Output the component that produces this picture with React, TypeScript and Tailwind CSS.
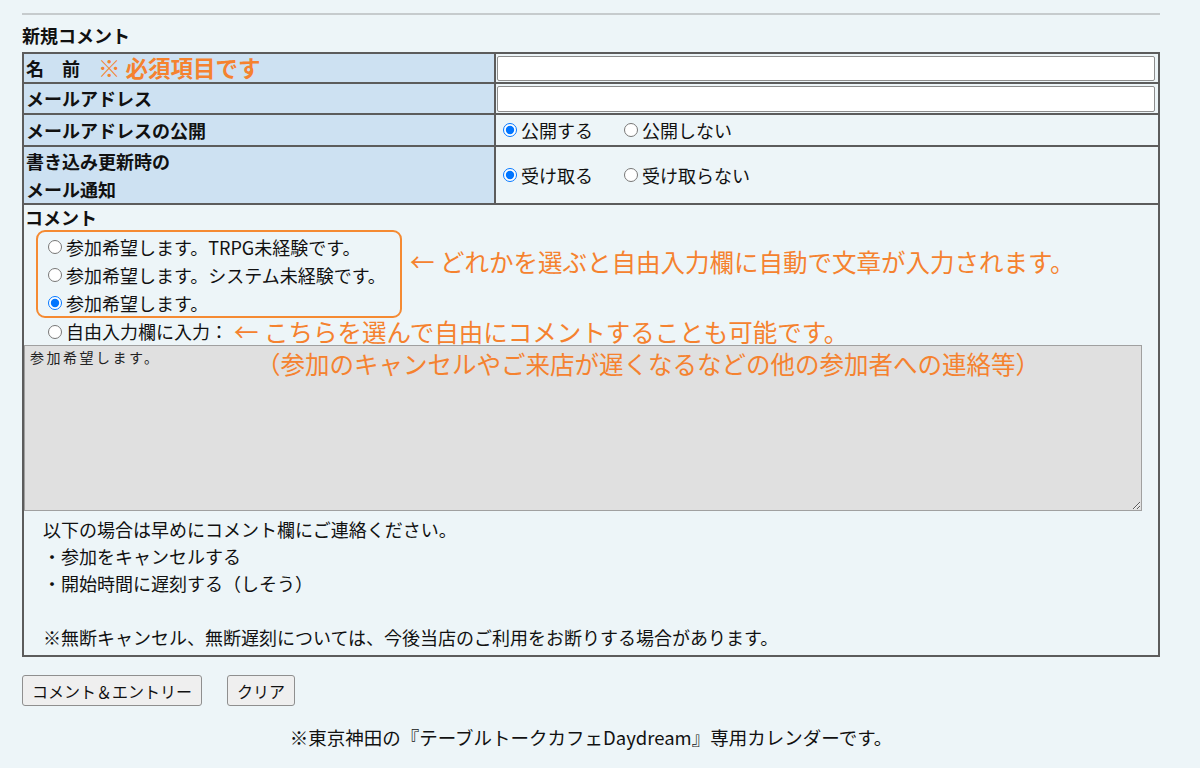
import { useState } from 'react'

const orange = 'text-[#f5822f]'

function Radio({ name, checked, onChange }: { name: string; checked: boolean; onChange: () => void }) {
  return (
    <input
      type="radio"
      name={name}
      checked={checked}
      onChange={onChange}
      className="w-[14px] h-[14px] m-0 mr-[4px] shrink-0"
    />
  )
}

export default function App() {
  const [publish, setPublish] = useState('yes')
  const [notify, setNotify] = useState('yes')
  const [preset, setPreset] = useState(2)

  const presets = [
    '参加希望します。TRPG未経験です。',
    '参加希望します。システム未経験です。',
    '参加希望します。',
  ]

  return (
    <div
      className="min-h-[768px] w-full bg-[#edf5f8] text-[#111] text-[18px]"
      style={{ fontFamily: '"Noto Sans CJK JP", "Noto Sans", sans-serif' }}
    >
      <div className="ml-[22px] w-[1138px] pt-[13px]">
        <div className="h-[2px] bg-[#c6cbcd]" />

        {/* heading */}
        <div className="mt-[6px] font-bold text-[18px] leading-[28px] h-[31px]">新規コメント</div>

        {/* Form table */}
        <div className="border border-[#5c5c5c]">
          {/* Name */}
          <div className="flex">
            <div className="w-[472px] h-[30px] border border-[#5c5c5c] bg-[#cde1f2] flex items-center pl-[2px] font-bold">
              <span>名　前</span>
              <span className={`ml-[18px] text-[22.5px] ${orange} font-bold`}>※ 必須項目です</span>
            </div>
            <div className="flex-1 h-[30px] border border-[#5c5c5c] flex items-center pl-[1px]">
              <input type="text" className="w-[658px] h-[25px] bg-white border border-[#8d8d8d] rounded-[2px] outline-none" />
            </div>
          </div>

          {/* Mail */}
          <div className="flex">
            <div className="w-[472px] h-[31px] border border-[#5c5c5c] bg-[#cde1f2] flex items-center pl-[2px] font-bold">
              メールアドレス
            </div>
            <div className="flex-1 h-[31px] border border-[#5c5c5c] flex items-center pl-[1px]">
              <input type="text" className="w-[658px] h-[26px] bg-white border border-[#8d8d8d] rounded-[2px] outline-none" />
            </div>
          </div>

          {/* Mail publish */}
          <div className="flex">
            <div className="w-[472px] h-[32px] border border-[#5c5c5c] bg-[#cde1f2] flex items-center pl-[2px] font-bold">
              メールアドレスの公開
            </div>
            <div className="flex-1 h-[32px] border border-[#5c5c5c] flex items-center pl-[7px]">
              <label className="flex items-center">
                <Radio name="pub" checked={publish === 'yes'} onChange={() => setPublish('yes')} />
                公開する
              </label>
              <label className="flex items-center ml-[31px]">
                <Radio name="pub" checked={publish === 'no'} onChange={() => setPublish('no')} />
                公開しない
              </label>
            </div>
          </div>

          {/* Notification */}
          <div className="flex">
            <div className="w-[472px] h-[58px] border border-[#5c5c5c] bg-[#cde1f2] flex flex-col justify-center pl-[2px] font-bold leading-[28px]">
              <span>書き込み更新時の</span>
              <span>メール通知</span>
            </div>
            <div className="flex-1 h-[58px] border border-[#5c5c5c] flex items-center pl-[7px]">
              <label className="flex items-center">
                <Radio name="notify" checked={notify === 'yes'} onChange={() => setNotify('yes')} />
                受け取る
              </label>
              <label className="flex items-center ml-[31px]">
                <Radio name="notify" checked={notify === 'no'} onChange={() => setNotify('no')} />
                受け取らない
              </label>
            </div>
          </div>

          {/* Comment */}
          <div className="border border-[#5c5c5c] h-[452px]">
            <div className="font-bold leading-[25px] pl-[1px]">コメント</div>

            <div className="flex items-start">
              <div className="ml-[12px] w-[366px] h-[88px] border-2 border-[#f58a32] rounded-[9px] pt-[1px] leading-[28px]">
                {presets.map((p, i) => (
                  <label key={i} className="flex items-center pl-[10px]">
                    <Radio name="preset" checked={preset === i} onChange={() => setPreset(i)} />
                    {p}
                  </label>
                ))}
              </div>
              <div className={`ml-[8px] mt-[18px] text-[24.5px] leading-[28px] ${orange}`}>
                ← どれかを選ぶと自由入力欄に自動で文章が入力されます。
              </div>
            </div>

            <div className="flex items-center pl-[24px] leading-[27px]">
              <label className="flex items-center">
                <Radio name="preset" checked={preset === 3} onChange={() => setPreset(3)} />
                自由入力欄に入力：
              </label>
              <span className={`ml-[6px] text-[24.5px] ${orange}`}>← こちらを選んで自由にコメントすることも可能です。</span>
            </div>

            <div className="relative">
              <textarea
                defaultValue="参加希望します。"
                className="block w-[1118px] h-[166px] bg-[#e0e0e0] border border-[#a0a0a0] px-[5px] py-[2px] text-[14px] tracking-[2.5px] leading-[18px] text-[#222] outline-none"
              />
              <div className={`absolute left-[232px] top-[4px] text-[24.5px] leading-[30px] ${orange} pointer-events-none`}>
                （参加のキャンセルやご来店が遅くなるなどの他の参加者への連絡等）
              </div>
            </div>

            <div className="pl-[19px] pt-[5px] leading-[27px]">
              <div>以下の場合は早めにコメント欄にご連絡ください。</div>
              <div>・参加をキャンセルする</div>
              <div>・開始時間に遅刻する（しそう）</div>
              <div className="h-[27px]" />
              <div>※無断キャンセル、無断遅刻については、今後当店のご利用をお断りする場合があります。</div>
            </div>
          </div>
        </div>

        {/* Buttons */}
        <div className="flex mt-[18px] gap-[25px]">
          <button className="h-[31px] w-[180px] bg-[#efefef] border border-[#8f8f8f] rounded-[3px] text-[16px] text-[#111]">
            コメント＆エントリー
          </button>
          <button className="h-[31px] w-[68px] bg-[#efefef] border border-[#8f8f8f] rounded-[3px] text-[16px] text-[#111]">
            クリア
          </button>
        </div>

        {/* Footer */}
        <div className="mt-[17px] text-center leading-[28px] text-[18.5px]">
          ※東京神田の『テーブルトークカフェDaydream』専用カレンダーです。
        </div>
      </div>
    </div>
  )
}
